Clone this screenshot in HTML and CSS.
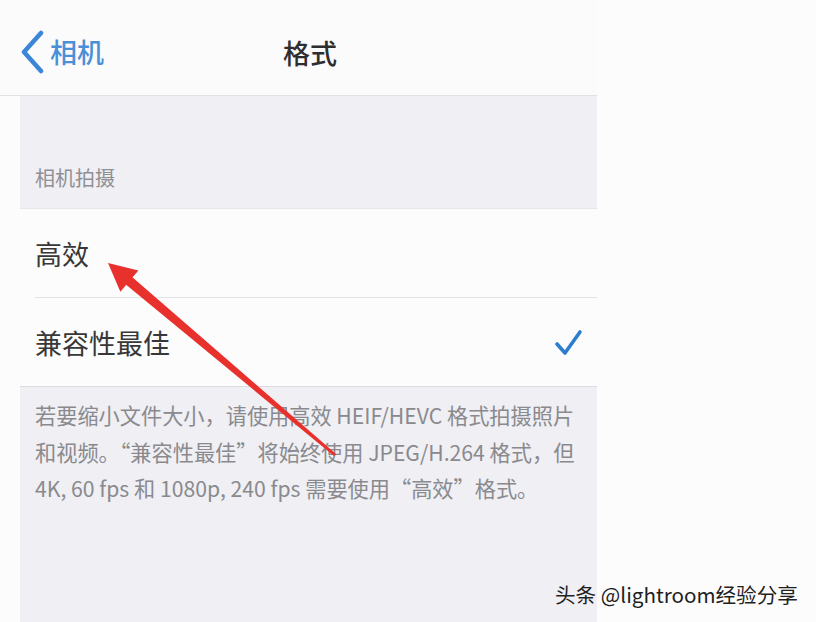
FILE: index.html
```html
<!DOCTYPE html>
<html lang="zh-CN">
<head>
  <meta charset="UTF-8">
  <meta name="viewport" content="width=device-width, initial-scale=1.0">
  <title>格式</title>
  <link rel="stylesheet" href="styles.css">
</head>
<body>
  <div class="phone">
    <div class="navbar">
      <a class="back" href="#">
        <svg class="chevron" width="26" height="44" viewBox="0 0 26 44">
          <path d="M21 3 L4 22 L21 41" fill="none" stroke="#3b86d6" stroke-width="4.5" stroke-linecap="round" stroke-linejoin="round"/>
        </svg>
        <span>相机</span>
      </a>
      <div class="title">格式</div>
    </div>

    <div class="section-header">相机拍摄</div>

    <div class="list">
      <div class="row">
        <span>高效</span>
      </div>
      <div class="row">
        <span>兼容性最佳</span>
        <svg class="check" width="30" height="30" viewBox="0 0 30 30">
          <path d="M4 16 L12 25 L27 4" fill="none" stroke="#2f7dcf" stroke-width="3.6" stroke-linecap="round" stroke-linejoin="round"/>
        </svg>
      </div>
    </div>

    <div class="footnote">
      若要缩小文件大小，请使用高效 HEIF/HEVC 格式拍摄照片<br>
      和视频。“兼容性最佳”将始终使用 JPEG/H.264 格式，但<br>
      4K, 60 fps 和 1080p, 240 fps 需要使用“高效”格式。
    </div>
  </div>

  <svg class="arrow" width="816" height="622" viewBox="0 0 816 622">
    <polygon points="123.1,282.3 129.5,274.7 336,453.9 334,456.1" fill="#e8302c"/>
    <polygon points="108,263 138.4,270.4 129.4,281.1 120.4,291.8" fill="#e8302c"/>
  </svg>

  <div class="watermark">头条 @lightroom经验分享</div>
</body>
</html>
```

FILE: styles.css
```css
body {
  margin: 0;
  height: 622px;
  overflow: hidden;
  position: relative;
  background-color: #fcfcfd;
  font-family: "Noto Sans CJK SC", "Noto Sans", sans-serif;
}

.phone {
  width: 577px;
  margin-left: 20px;
  height: 622px;
  background-color: #efeff4;
}

.navbar {
  height: 95px;
  display: flex;
  align-items: center;
  position: relative;
  background-color: #fbfbfc;
  border-bottom: 1px solid #e2e2e6;
  margin-left: -20px;
  padding-left: 20px;
}

.back {
  display: flex;
  align-items: center;
  gap: 4px;
  color: #4a8fd8;
  text-decoration: none;
  font-size: 27px;
  font-weight: 500;
  margin-top: 8px;
}

.title {
  position: absolute;
  left: 283px;
  top: 4px;
  line-height: 97px;
  font-size: 27px;
  font-weight: 500;
  color: #2e2e2e;
}

.section-header {
  height: 112px;
  box-sizing: border-box;
  padding: 0 0 16px 15px;
  display: flex;
  align-items: flex-end;
  font-size: 20px;
  color: #8f8f94;
}

.list {
  background-color: #fcfcfd;
  border-top: 1px solid #e6e6ea;
  border-bottom: 1px solid #dcdce0;
  padding-left: 15px;
}

.row {
  height: 88px;
  display: flex;
  align-items: center;
  justify-content: space-between;
  padding-right: 14px;
  font-size: 27px;
  color: #383838;
}

.row + .row {
  border-top: 1px solid #e3e3e7;
}

.row .check {
  margin-top: 2px;
}

.footnote {
  padding: 10px 10px 0 15px;
  font-size: 21.2px;
  line-height: 36.5px;
  color: #8a8a8e;
  white-space: nowrap;
}

.arrow {
  position: absolute;
  left: 0;
  top: 0;
}

.watermark {
  position: absolute;
  left: 555px;
  top: 580px;
  font-size: 20.6px;
  line-height: 28px;
  color: #1f1f1f;
}
```
